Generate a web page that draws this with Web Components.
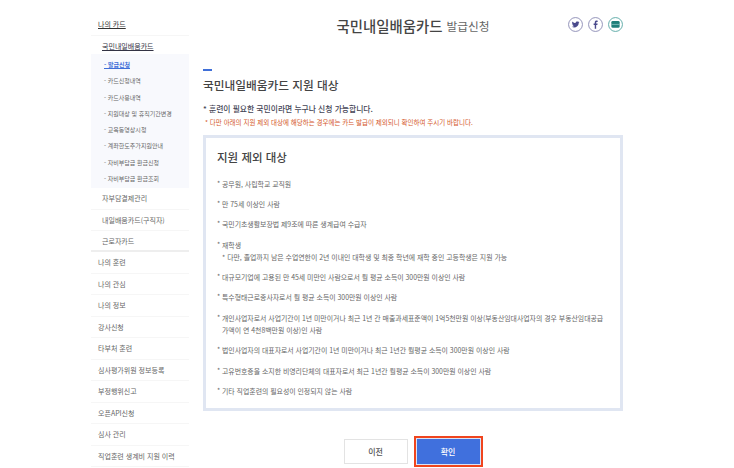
<!DOCTYPE html>
<html lang="ko">
<head>
<meta charset="utf-8">
<title>국민내일배움카드 발급신청</title>
<style>
html, body { margin: 0; height: 468px; overflow: hidden; background: #fff; }
body { font-family: "Noto Sans CJK KR", "Noto Sans", sans-serif; }
</style>
</head>
<body>
<card-page></card-page>
<script>
class SideMenu extends HTMLElement {
    constructor() {
        super();
        this.attachShadow({ mode: 'open' });
    }

    connectedCallback() {
        const sub = ['발급신청', '카드신청내역', '카드사용내역', '지원대상 및 휴직기간변경', '교육동영상시청', '계좌한도추가지원안내', '자비부담금 환급신청', '자비부담금 환급조회'];
        const inner = ['자부담결제관리', '내일배움카드(구직자)', '근로자카드'];
        const top = ['나의 훈련', '나의 관심', '나의 정보', '강사신청', '타부처 훈련', '심사평가위원 정보등록', '부정행위신고', '오픈API신청', '심사 관리', '직업훈련 생계비 지원 이력'];

        this.shadowRoot.innerHTML = `
            <style>
                :host { display: block; width: 98px; padding-top: 14px; font-size: 7px; color: #666; }
                .row { height: 21.5px; line-height: 21px; box-sizing: border-box; border-bottom: 1px solid #f6f6f6; padding-left: 7px; white-space: nowrap; }
                .head { color: #333; text-decoration: underline; text-underline-offset: 1px; }
                .inner { padding-left: 11px; }
                .cur { color: #334; height: 18.5px; border: 0; }
                .last { border-bottom: 2px solid #eee; height: 21px; }
                .sub { background: #f8f9fd; padding: 3px 0 1px; font-size: 6px; }
                .sub div { height: 16.3px; line-height: 16px; padding-left: 13px; color: #666; white-space: nowrap; }
                .sub .on { color: #3f6fd8; font-weight: 700; text-decoration: underline; }
            </style>
            <div class="row head">나의 카드</div>
            <div class="row inner cur head">국민내일배움카드</div>
            <div class="sub">${sub.map((s, i) => `<div class="${i === 0 ? 'on' : ''}">- ${s}</div>`).join('')}</div>
            ${inner.map((s, i) => `<div class="row inner ${i === 2 ? 'last' : ''}">${s}</div>`).join('')}
            ${top.map(s => `<div class="row">${s}</div>`).join('')}
        `;
    }
}

class ShareIcons extends HTMLElement {
    constructor() {
        super();
        this.attachShadow({ mode: 'open' });
        this.shadowRoot.innerHTML = `
            <style>
                :host { display: flex; gap: 5px; }
                svg { width: 15px; height: 15px; display: block; }
            </style>
            <svg viewBox="0 0 16 16"><circle cx="8" cy="8" r="7.4" fill="#fff" stroke="#8d8db5"/><path d="M12.2 5.3c-.3.1-.6.2-1 .3.3-.2.6-.5.7-.9-.3.2-.7.3-1 .4-.7-.8-2.600-.4-2.800.8 0 .2 0 .4 0 .6C6.700 6.400 5.500 5.800 4.600 4.800c-.4.800-.2 1.700.5 2.200-.3 0-.5-.1-.8-.2 0 .8.600 1.500 1.400 1.700-.2.100-.5.100-.8 0 .2.700.9 1.100 1.600 1.200-.7.500-1.500.8-2.500.7 2.900 1.700 7.200.3 7.500-4.100.3-.3.500-.6.700-1z" fill="#4a4a8c"/></svg>
            <svg viewBox="0 0 16 16"><circle cx="8" cy="8" r="7.4" fill="#fff" stroke="#8d8db5"/><path d="M8.700 12.500V8.400h1.300l.2-1.500H8.700V6c0-.5.200-.8.800-.8h.8V3.900c-.3 0-.7-.1-1.100-.1-1.200 0-2 .7-2 2.100v1H6v1.500h1.200v4.100z" fill="#4a4a8c"/></svg>
            <svg viewBox="0 0 16 16"><circle cx="8" cy="8" r="7.4" fill="#fff" stroke="#5aa9a5"/><rect x="3.600" y="4.200" width="8.800" height="7.200" rx="1.400" fill="#1f7f7a"/><rect x="3.600" y="7.400" width="8.800" height=".8" fill="#8fc8c5"/></svg>
        `;
    }
}

class PageTitle extends HTMLElement {
    constructor() {
        super();
        this.attachShadow({ mode: 'open' });
        this.shadowRoot.innerHTML = `
            <style>
                :host { display: flex; align-items: center; height: 50px; position: relative; justify-content: center; color: #444; box-sizing: border-box; }
                .t { font-size: 14.400px; font-weight: 500; }
                .s { font-size: 11.700px; color: #666; margin-left: 4px; margin-top: 1px; }
                div { display: flex; align-items: center; }
                share-icons { position: absolute; right: 0; top: 17px; }
            </style>
            <div><span class="t">국민내일배움카드</span><span class="s">발급신청</span></div>
            <share-icons></share-icons>
        `;
    }
}

class ExclusionPanel extends HTMLElement {
    constructor() {
        super();
        this.attachShadow({ mode: 'open' });
        const items = [
            ['공무원, 사립학교 교직원'],
            ['만 75세 이상인 사람'],
            ['국민기초생활보장법 제9조에 따른 생계급여 수급자'],
            ['재학생', '* 다만, 졸업까지 남은 수업연한이 2년 이내인 대학생 및 최종 학년에 재학 중인 고등학생은 지원 가능'],
            ['대규모기업에 고용된 만 45세 미만인 사람으로서 월 평균 소득이 300만원 이상인 사람'],
            ['특수형태근로종사자로서 월 평균 소득이 300만원 이상인 사람'],
            ['개인사업자로서 사업기간이 1년 미만이거나 최근 1년 간 매출과세표준액이 1억5천만원 이상(부동산임대사업자의 경우 부동산임대공급', '가액이 연 4천8백만원 이상)인 사람'],
            ['법인사업자의 대표자로서 사업기간이 1년 미만이거나 최근 1년간 월평균 소득이 300만원 이상인 사람'],
            ['고유번호증을 소지한 비영리단체의 대표자로서 최근 1년간 월평균 소득이 300만원 이상인 사람'],
            ['기타 직업훈련의 필요성이 인정되지 않는 사람']
        ];
        this.shadowRoot.innerHTML = `
            <style>
                :host { display: block; height: 276px; box-sizing: border-box; border: 3px solid #e0e6f2; padding: 11px 11px 0; color: #666; }
                h3 { margin: 0 0 13px; font-size: 11.500px; line-height: 16px; font-weight: 500; color: #444; }
                ul { list-style: none; margin: 0; padding: 0; font-size: 6.900px; line-height: 12.500px; display: flex; flex-direction: column; gap: 7.700px; }
                li { padding-left: 5px; position: relative; white-space: nowrap; }
                li::before { content: '*'; position: absolute; left: 0; top: -1px; }
                .note { display: block; }
            </style>
            <h3>지원 제외 대상</h3>
            <ul>${items.map(it => `<li>${it[0]}${it[1] ? `<span class="note">${it[1]}</span>` : ''}</li>`).join('')}</ul>
        `;
    }
}

class ActionButton extends HTMLElement {
    constructor() {
        super();
        this.attachShadow({ mode: 'open' });
        this.shadowRoot.innerHTML = `
            <style>
                :host { display: block; box-sizing: border-box; width: 64px; height: 25px; border: 1px solid #e3e3e3; background: #fff; color: #555; font-size: 8px; font-weight: 500; line-height: 23px; text-align: center; }
                :host([primary]) { width: 69px; height: 31px; border: 2px solid #f0451e; background: #4070dd; color: #fff; box-shadow: inset 0 0 0 1px #d9e2f7; line-height: 27px; }
            </style>
            <slot></slot>
        `;
    }
}

class CardPage extends HTMLElement {
    constructor() {
        super();
        this.attachShadow({ mode: 'open' });
        this.shadowRoot.innerHTML = `
            <style>
                :host { display: flex; gap: 14px; padding-left: 91px; height: 468px; box-sizing: border-box; overflow: hidden; }
                main { width: 420px; flex: none; }
                .bar { width: 9px; height: 2px; background: #3f6fd8; margin-top: 19px; }
                h2 { margin: 5px 0 0; font-size: 11.700px; line-height: 17px; font-weight: 500; color: #444; }
                .lead { margin: 10px 0 0; font-size: 7.800px; line-height: 12px; color: #445; font-weight: 500; }
                .warn { margin: 1px 0 0 2px; font-size: 6.500px; line-height: 12px; color: #d4561f; }
                exclusion-panel { margin-top: 7px; }
                .actions { display: flex; justify-content: center; align-items: center; gap: 6px; margin-top: 25px; }
            </style>
            <side-menu></side-menu>
            <main>
                <page-title></page-title>
                <div class="bar"></div>
                <h2>국민내일배움카드 지원 대상</h2>
                <p class="lead">* 훈련이 필요한 국민이라면 누구나 신청 가능합니다.</p>
                <p class="warn">* 다만 아래의 지원 제외 대상에 해당하는 경우에는 카드 발급이 제외되니 확인하여 주시기 바랍니다.</p>
                <exclusion-panel></exclusion-panel>
                <div class="actions">
                    <action-button>이전</action-button>
                    <action-button primary>확인</action-button>
                </div>
            </main>
        `;
    }
}

customElements.define('side-menu', SideMenu);
customElements.define('share-icons', ShareIcons);
customElements.define('page-title', PageTitle);
customElements.define('exclusion-panel', ExclusionPanel);
customElements.define('action-button', ActionButton);
customElements.define('card-page', CardPage);
</script>
</body>
</html>
